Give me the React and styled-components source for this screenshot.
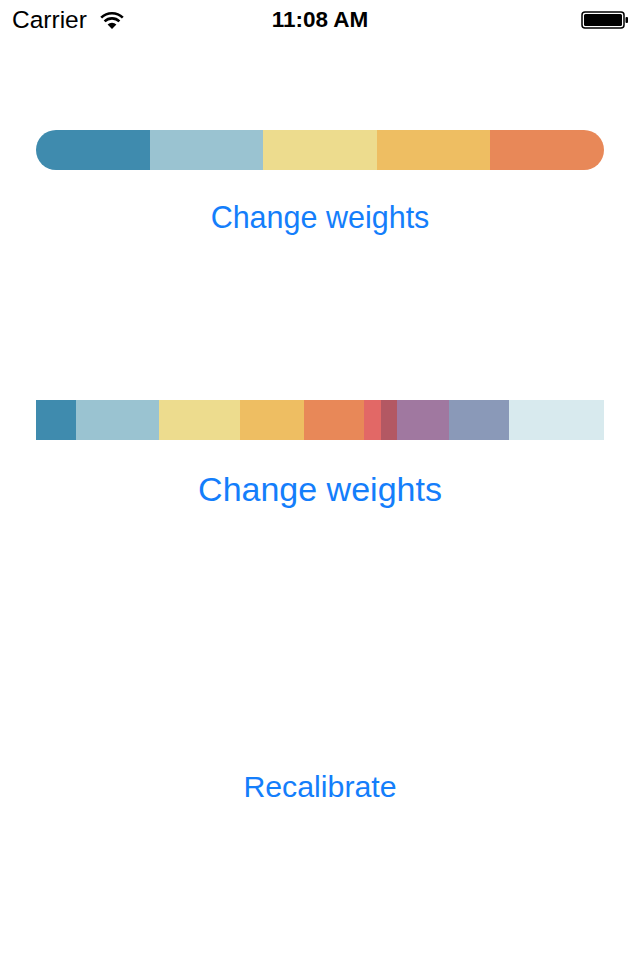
import styled, { createGlobalStyle } from 'styled-components'

const GlobalStyle = createGlobalStyle`
    body {
        margin: 0;
        background: #ffffff;
        font-family: "Liberation Sans", Arial, sans-serif;
    }
`

const Screen = styled.div`
    width: 640px;
    height: 960px;
    background: #ffffff;
    overflow: hidden;
`

const StatusBar = styled.div`
    height: 40px;
    display: grid;
    grid-template-columns: 1fr auto 1fr;
    align-items: center;
    padding: 0 12px;
    color: #000;
    font-size: 22px;
`

const Carrier = styled.div`
    display: flex;
    align-items: center;
    gap: 13px;
    font-size: 24.5px;
`

const Clock = styled.div`
    font-weight: bold;
    font-size: 22.5px;
`

const BatteryWrap = styled.div`
    justify-self: end;
    display: flex;
    align-items: center;
    margin-right: -1px;
`

const Content = styled.div`
    padding: 0 36px;
    display: flex;
    flex-direction: column;
    align-items: stretch;
`

const Bar = styled.div`
    display: flex;
    height: 40px;
    margin-top: ${(p) => p.$top}px;
    border-radius: ${(p) => (p.$rounded ? '20px' : '0')};
    overflow: hidden;
`

const Segment = styled.div`
    height: 100%;
    background: ${(p) => p.$color};
`

const LinkButton = styled.button`
    align-self: center;
    border: none;
    background: none;
    padding: 0;
    color: #147efb;
    font-family: "Liberation Sans", Arial, sans-serif;
    font-size: ${(p) => p.$size}px;
    line-height: ${(p) => p.$line}px;
    margin-top: ${(p) => p.$top}px;
    cursor: pointer;
`

const palette = ['#3f8bae', '#9ac3d1', '#eddc8e', '#eebe62', '#e88858', '#e26866', '#b35863', '#a078a0', '#8a99b8', '#d8eaee']

const firstWeights = [1, 1, 1, 1, 1]
const secondWidths = [40, 83, 81, 64, 60, 17, 16, 52, 60, 95]

function Wifi() {
    return (
        <svg width="24" height="18" viewBox="0 0 24 18">
            <path d="M12 18 L7.6 13.4 A6.4 6.4 0 0 1 16.4 13.4 Z" fill="#000" />
            <path d="M4.6 10.4 A10.6 10.6 0 0 1 19.4 10.4" stroke="#000" strokeWidth="2.6" fill="none" />
            <path d="M1.2 6.6 A15.4 15.4 0 0 1 22.8 6.6" stroke="#000" strokeWidth="2.6" fill="none" />
        </svg>
    )
}

function Battery() {
    return (
        <svg width="48" height="18" viewBox="0 0 48 18">
            <rect x="1" y="1" width="42" height="16" rx="3" fill="none" stroke="#000" strokeWidth="1.5" />
            <rect x="3" y="3" width="38" height="12" rx="1.5" fill="#000" />
            <rect x="44.5" y="6" width="2.5" height="6" rx="1" fill="#000" />
        </svg>
    )
}

export default function App() {
    const total = firstWeights.reduce((a, b) => a + b, 0)
    const total2 = secondWidths.reduce((a, b) => a + b, 0)

    return (
        <Screen>
            <GlobalStyle />
            <StatusBar>
                <Carrier>
                    Carrier
                    <Wifi />
                </Carrier>
                <Clock>11:08 AM</Clock>
                <BatteryWrap>
                    <Battery />
                </BatteryWrap>
            </StatusBar>
            <Content>
                <Bar $top={90} $rounded>
                    {firstWeights.map((w, i) => (
                        <Segment key={i} $color={palette[i]} style={{ width: `${(w / total) * 100}%` }} />
                    ))}
                </Bar>
                <LinkButton $size={30.5} $line={36} $top={29}>Change weights</LinkButton>

                <Bar $top={165}>
                    {secondWidths.map((w, i) => (
                        <Segment key={i} $color={palette[i]} style={{ width: `${(w / total2) * 100}%` }} />
                    ))}
                </Bar>
                <LinkButton $size={34} $line={40} $top={29}>Change weights</LinkButton>

                <LinkButton $size={30.3} $line={36} $top={260}>Recalibrate</LinkButton>
            </Content>
        </Screen>
    )
}
